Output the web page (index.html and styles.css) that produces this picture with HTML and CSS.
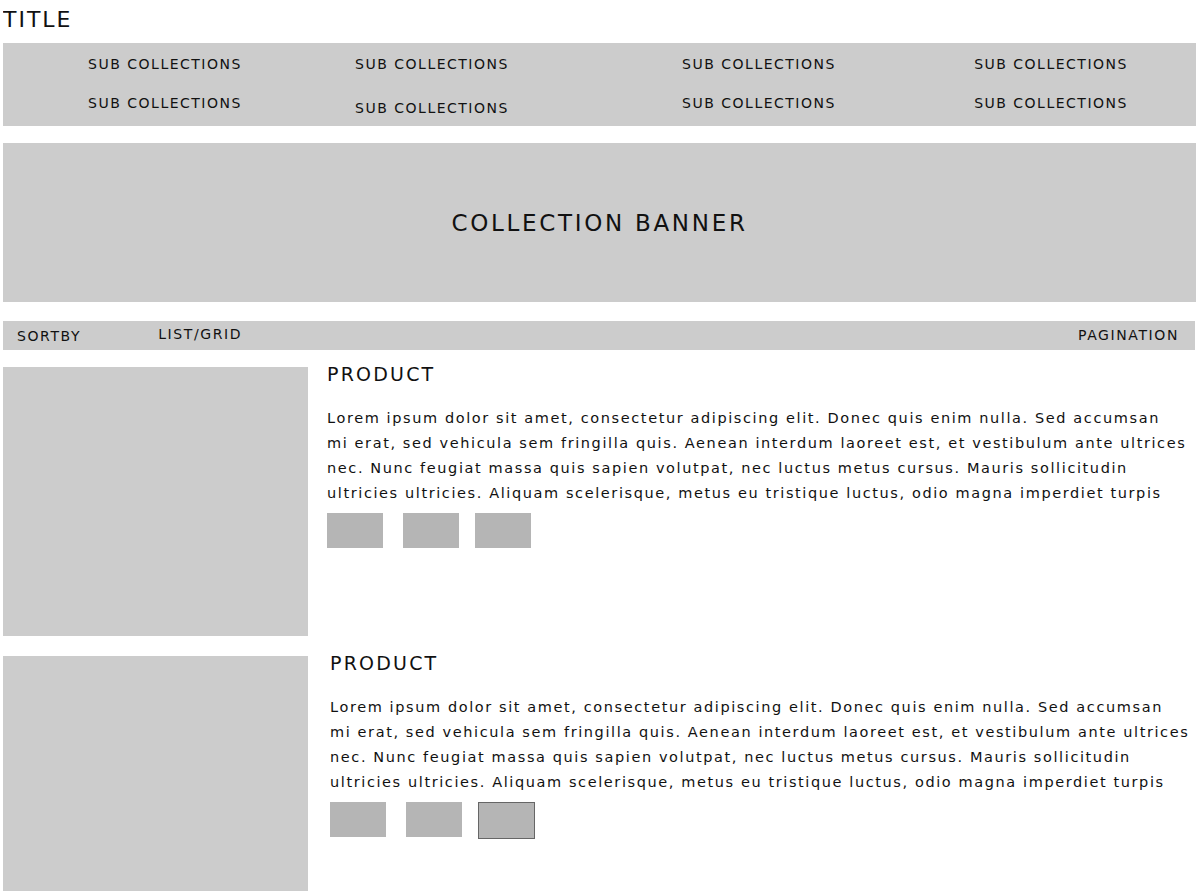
FILE: index.html
```html
<html>

<head>
	<link rel="stylesheet" href="styles.css">
</head>

<body>
	<h1 class="title">TITLE</h1>

	<nav class="subnav">
		<a href="#">SUB COLLECTIONS</a>
		<a href="#">SUB COLLECTIONS</a>
		<a href="#">SUB COLLECTIONS</a>
		<a href="#">SUB COLLECTIONS</a>
		<a href="#">SUB COLLECTIONS</a>
		<a href="#" class="low">SUB COLLECTIONS</a>
		<a href="#">SUB COLLECTIONS</a>
		<a href="#">SUB COLLECTIONS</a>
	</nav>

	<div class="banner">
		<h2>COLLECTION BANNER</h2>
	</div>

	<div class="toolbar">
		<span class="sortby">SORTBY</span>
		<span class="view">LIST/GRID</span>
		<span class="pagination">PAGINATION</span>
	</div>

	<div class="product">
		<div class="product-image"></div>
		<div class="product-info">
			<h3>PRODUCT</h3>
			<p>Lorem ipsum dolor sit amet, consectetur adipiscing elit. Donec quis enim nulla. Sed accumsan<br>
				mi erat, sed vehicula sem fringilla quis. Aenean interdum laoreet est, et vestibulum ante ultrices<br>
				nec. Nunc feugiat massa quis sapien volutpat, nec luctus metus cursus. Mauris sollicitudin<br>
				ultricies ultricies. Aliquam scelerisque, metus eu tristique luctus, odio magna imperdiet turpis</p>
			<div class="swatches">
				<div class="swatch"></div>
				<div class="swatch"></div>
				<div class="swatch"></div>
			</div>
		</div>
	</div>

	<div class="product wide">
		<div class="product-image"></div>
		<div class="product-info">
			<h3>PRODUCT</h3>
			<p>Lorem ipsum dolor sit amet, consectetur adipiscing elit. Donec quis enim nulla. Sed accumsan<br>
				mi erat, sed vehicula sem fringilla quis. Aenean interdum laoreet est, et vestibulum ante ultrices<br>
				nec. Nunc feugiat massa quis sapien volutpat, nec luctus metus cursus. Mauris sollicitudin<br>
				ultricies ultricies. Aliquam scelerisque, metus eu tristique luctus, odio magna imperdiet turpis</p>
			<div class="swatches">
				<div class="swatch"></div>
				<div class="swatch"></div>
				<div class="swatch selected"></div>
			</div>
		</div>
	</div>
</body>

</html>
```

FILE: styles.css
```css
:root {
	--box: #cccccc;
	--swatch: #b5b5b5;
	--ink: #111111;
}

body {
	margin: 0 0 0 3px;
	font-family: "DejaVu Sans", "Noto Sans", sans-serif;
	color: var(--ink);
	background: white;
}

.title {
	margin: 0;
	height: 43px;
	box-sizing: border-box;
	padding-top: 7px;
	font-size: 22px;
	font-weight: 400;
	line-height: 26px;
	letter-spacing: 2px;
}

.subnav {
	display: grid;
	grid-template-columns: 324px 210px 444px 140px;
	grid-auto-rows: 18px;
	row-gap: 21px;
	padding: 12px 0 14px;
	background: var(--box);
}

.subnav a {
	justify-self: center;
	white-space: nowrap;
	font-size: 14px;
	line-height: 18px;
	letter-spacing: 1.5px;
	color: var(--ink);
	text-decoration: none;
}

.subnav a.low {
	margin-top: 5px;
}

.banner {
	display: flex;
	justify-content: center;
	align-items: center;
	height: 159px;
	margin-top: 17px;
	background: var(--box);
}

.banner h2 {
	margin: 0;
	font-size: 23px;
	font-weight: 400;
	letter-spacing: 2.7px;
}

.toolbar {
	display: flex;
	align-items: center;
	box-sizing: border-box;
	height: 29px;
	margin: 19px 1px 0 0;
	padding: 0 16px 4px 14px;
	background: var(--box);
	font-size: 14px;
	letter-spacing: 1.6px;
}

.sortby {
	margin-top: 5px;
}

.view {
	margin-left: 77px;
}

.pagination {
	margin-left: auto;
	margin-top: 2px;
}

.product {
	display: flex;
	gap: 19px;
	margin-top: 17px;
}

.product + .product {
	margin-top: 20px;
}

.product.wide {
	gap: 22px;
}

.product-image {
	flex: none;
	width: 305px;
	height: 269px;
	background: var(--box);
}

.product-info h3 {
	margin: 0;
	font-size: 19px;
	font-weight: 400;
	line-height: 14px;
	letter-spacing: 2.2px;
}

.product-info p {
	margin: 25px 0 0;
	white-space: nowrap;
	font-size: 14.5px;
	line-height: 25px;
	letter-spacing: 1.6px;
}

.swatches {
	display: flex;
	gap: 16px;
	margin-top: 7px;
}

.swatch {
	width: 56px;
	height: 35px;
	background: var(--swatch);
}

.swatch:first-child {
	margin-right: 4px;
}

.swatch.selected {
	width: 55px;
	border: 1px solid #666666;
}
```
